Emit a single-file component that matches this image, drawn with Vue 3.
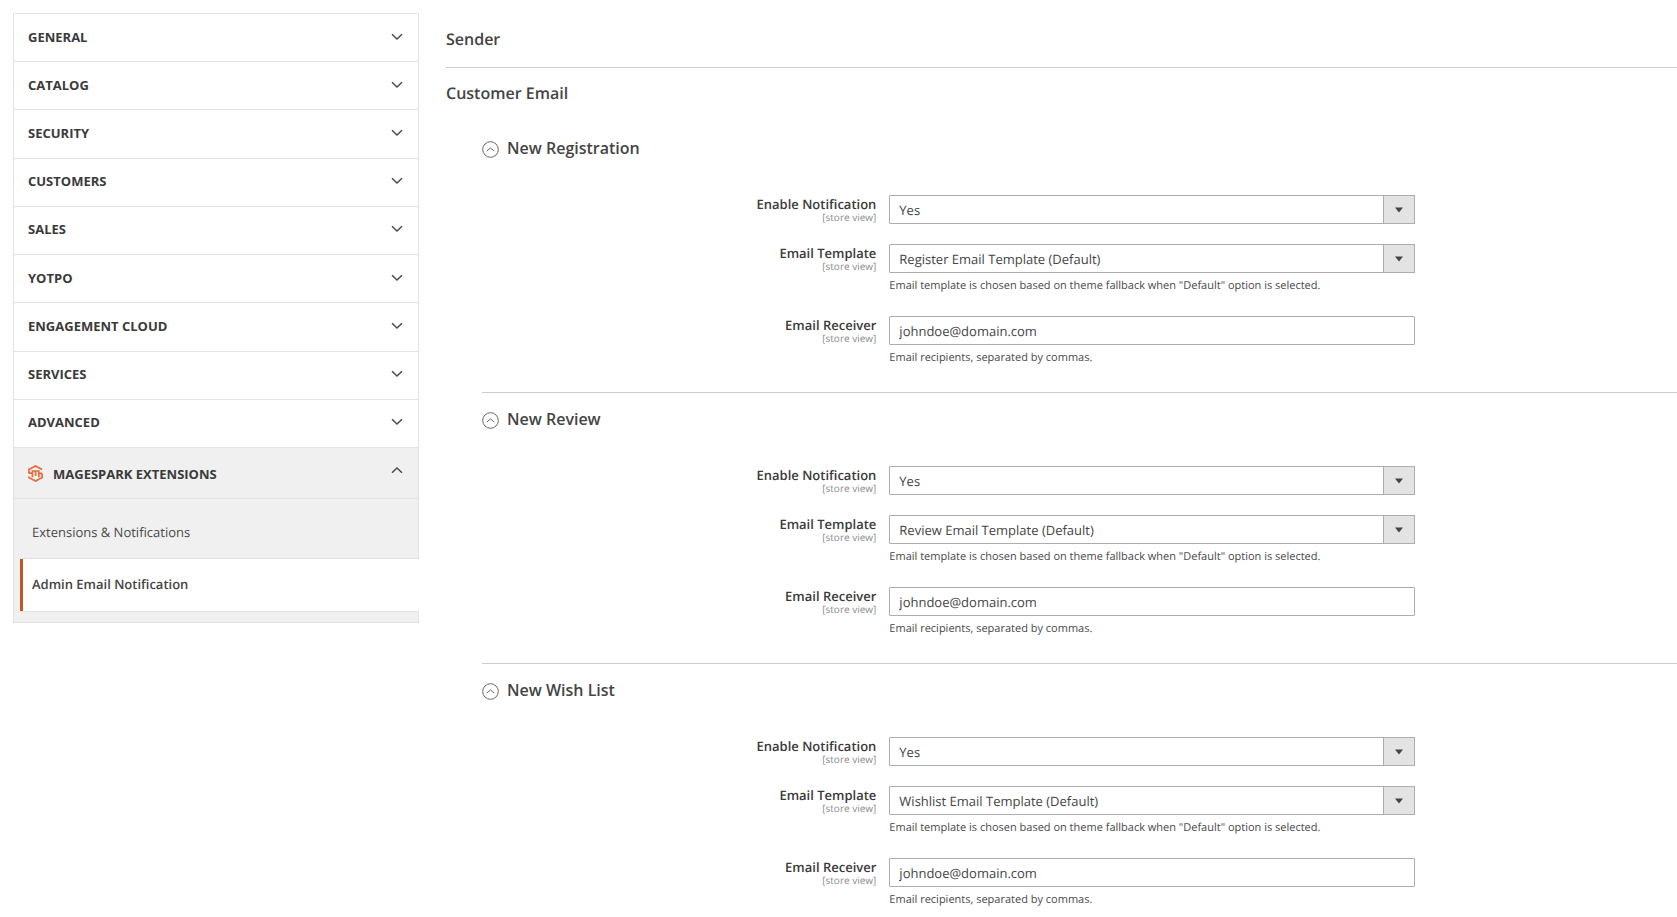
<script setup>
import { ref, reactive } from 'vue'

const tabs = ['General', 'Catalog', 'Security', 'Customers', 'Sales', 'Yotpo', 'Engagement Cloud', 'Services', 'Advanced']
const open = ref(true)

const groups = reactive([
  { id: 'registration', title: 'New Registration', template: 'Register Email Template (Default)', enabled: 'Yes', receiver: 'johndoe@domain.com', open: true },
  { id: 'review', title: 'New Review', template: 'Review Email Template (Default)', enabled: 'Yes', receiver: 'johndoe@domain.com', open: true },
  { id: 'wishlist', title: 'New Wish List', template: 'Wishlist Email Template (Default)', enabled: 'Yes', receiver: 'johndoe@domain.com', open: true },
])
</script>

<template>
  <div class="page">
    <nav class="sidebar">
      <div class="tabs">
        <button v-for="tab in tabs" :key="tab" type="button" class="tab">
          <span>{{ tab }}</span>
          <svg class="chevron" width="12" height="8" viewBox="0 0 12 8" aria-hidden="true"><path d="M1 1.2 L6 6 L11 1.2" /></svg>
        </button>
      </div>
      <div class="section">
        <button type="button" class="tab section-head" :aria-expanded="open" @click="open = !open">
          <svg class="logo" width="15" height="17" viewBox="0 0 15 17" aria-hidden="true">
            <path d="M0.9 8.4 V4.6 L7.5 0.9 L14.1 4.6 M14.1 8.4 V12.4 L7.5 16.1 L0.9 12.4 V11.4" />
            <path d="M0.9 8.2 H4.4 V12.2 M4.4 8.2 V6 H10.8 V12.2 M7.6 6 V11 M10.8 8.4 H14.1" />
          </svg>
          <span class="section-name">MageSpark Extensions</span>
          <svg class="chevron" width="12" height="8" viewBox="0 0 12 8" aria-hidden="true"><path d="M1 6.8 L6 2 L11 6.8" /></svg>
        </button>
        <div v-show="open" class="links">
          <a href="#extensions" class="link">Extensions &amp; Notifications</a>
          <a href="#admin-email" class="link active" aria-current="page">Admin Email Notification</a>
        </div>
      </div>
    </nav>

    <main class="content">
      <h2 class="title sender">Sender</h2>
      <h2 class="title customer">Customer Email</h2>

      <section v-for="g in groups" :key="g.id" class="group">
        <h3 class="group-title">
          <button type="button" class="toggle" :aria-expanded="g.open" @click="g.open = !g.open">
            <svg width="17" height="17" viewBox="0 0 17 17" aria-hidden="true">
              <circle cx="8.5" cy="8.5" r="7.8" />
              <path d="M4.8 10 L8.5 7 L12.2 10" />
            </svg>
            <span>{{ g.title }}</span>
          </button>
        </h3>
        <div v-show="g.open" class="fields">
          <div class="field">
            <label :for="g.id + '-enabled'" class="label">Enable Notification<span class="scope">[store view]</span></label>
            <div class="value">
              <div class="select">
                <select :id="g.id + '-enabled'" v-model="g.enabled" class="control">
                  <option>Yes</option>
                  <option>No</option>
                </select>
                <span class="arrow"><svg width="8" height="6" viewBox="0 0 8 6" aria-hidden="true"><path d="M0 0.5 H8 L4 5.5 Z" /></svg></span>
              </div>
            </div>
          </div>
          <div class="field">
            <label :for="g.id + '-template'" class="label">Email Template<span class="scope">[store view]</span></label>
            <div class="value">
              <div class="select">
                <select :id="g.id + '-template'" class="control">
                  <option>{{ g.template }}</option>
                </select>
                <span class="arrow"><svg width="8" height="6" viewBox="0 0 8 6" aria-hidden="true"><path d="M0 0.5 H8 L4 5.5 Z" /></svg></span>
              </div>
              <p class="note">Email template is chosen based on theme fallback when "Default" option is selected.</p>
            </div>
          </div>
          <div class="field">
            <label :for="g.id + '-receiver'" class="label">Email Receiver<span class="scope">[store view]</span></label>
            <div class="value">
              <input :id="g.id + '-receiver'" v-model="g.receiver" type="text" class="control">
              <p class="note">Email recipients, separated by commas.</p>
            </div>
          </div>
        </div>
      </section>
    </main>
  </div>
</template>

<style>
body {
  margin: 0;
  background: #fff;
}
</style>

<style scoped>
.page {
  display: flex;
  align-items: flex-start;
  padding: 13px 0 0 13px;
  color: #444;
  font-family: "Open Sans", "Noto Sans", sans-serif;
  font-size: 13px;
  text-rendering: geometricPrecision;
}

*, *::before, *::after {
  box-sizing: border-box;
}

button {
  font-family: inherit;
  border: 0;
  background: none;
  cursor: pointer;
}

.sidebar {
  flex: 0 0 406px;
  border-top: 1px solid #e3e3e3;
}

.tabs {
  display: grid;
  grid-auto-rows: 1fr;
  min-height: 434px;
  border: solid #e3e3e3;
  border-width: 0 1px;
}

.tab {
  display: flex;
  align-items: center;
  justify-content: space-between;
  width: 100%;
  padding: 0 15px 2px 14px;
  border-bottom: 1px solid #e3e3e3;
  color: #3a3a3a;
  font-size: 13px;
  font-weight: 700;
  line-height: 20px;
  text-align: left;
  text-transform: uppercase;
}

.chevron {
  flex: none;
  fill: none;
  stroke: #4a4a4a;
  stroke-width: 1.5;
}

.section {
  background: #f0f0f0;
  border-bottom: 1px solid #e3e3e3;
}

.section-head {
  height: 51px;
  padding: 2px 15px 0 14px;
  border: 1px solid #e3e3e3;
  border-top: 0;
}

.section-head .chevron {
  margin-bottom: 8px;
}

.logo {
  flex: none;
  margin-right: 10px;
  margin-bottom: 2px;
  fill: none;
  stroke: #eb6a3b;
  stroke-width: 1.7;
}

.section-name {
  flex: 1;
}

.links {
  display: flex;
  flex-direction: column;
  padding-bottom: 10px;
  border-left: 1px solid #e3e3e3;
  background: linear-gradient(#e3e3e3, #e3e3e3) right / 1px 100% no-repeat;
}

.link {
  padding: 23px 18px 16px;
  color: #4a4a4a;
  line-height: 20px;
  text-decoration: none;
}

.link.active {
  margin-left: 6px;
  padding: 15px 12px 17px;
  border: solid #e3e3e3;
  border-width: 1px 0;
  box-shadow: inset 3px 0 #c8561d;
  background: #fff;
  color: #444;
  font-weight: 600;
}

.content {
  flex: 1;
  min-width: 0;
  padding-left: 27px;
}

.title,
.toggle {
  color: #444;
  font-size: 16px;
  font-weight: 600;
  line-height: 24px;
}

.title {
  margin: 0;
}

.sender {
  padding: 14px 0 16px;
  border-bottom: 1px solid #ccc;
}

.customer {
  padding: 13px 0 31px;
}

.group {
  margin-left: 36px;
}

.group + .group {
  margin-top: 24px;
  padding-top: 14px;
  border-top: 1px solid #ccc;
}

.group-title {
  margin: 0;
}

.toggle {
  display: flex;
  align-items: center;
  gap: 8px;
  padding: 0;
}

.toggle svg {
  margin-top: 3px;
  fill: none;
  stroke: #666;
  stroke-width: 1;
}

.fields {
  display: grid;
  padding-top: 35px;
}

.field {
  display: grid;
  grid-template-columns: 33% 44%;
  column-gap: 13px;
}

.field:not(:last-child) {
  padding-bottom: 20px;
}

.label {
  padding-top: 1px;
  color: #3a3a3a;
  font-size: 13px;
  font-weight: 600;
  line-height: 16px;
  text-align: right;
}

.scope {
  display: block;
  color: #8c8c8c;
  font-size: 10px;
  font-weight: 400;
  line-height: 10px;
}

.select {
  position: relative;
}

.control {
  display: block;
  width: 100%;
  height: 29px;
  margin: 0;
  padding: 0 9px;
  border: 1px solid #adadad;
  border-radius: 1px;
  background: #fff;
  color: #444;
  font-family: inherit;
  font-size: 13px;
  text-rendering: inherit;
  appearance: none;
}

.arrow {
  position: absolute;
  top: 0;
  right: 0;
  display: flex;
  align-items: center;
  justify-content: center;
  width: 32px;
  height: 100%;
  border: 1px solid #adadad;
  background: #e3e3e3;
  pointer-events: none;
}

.arrow svg {
  fill: #444;
}

.note {
  margin: 5px 0 2px;
  color: #4a4a4a;
  font-size: 11px;
  line-height: 16px;
}
</style>
